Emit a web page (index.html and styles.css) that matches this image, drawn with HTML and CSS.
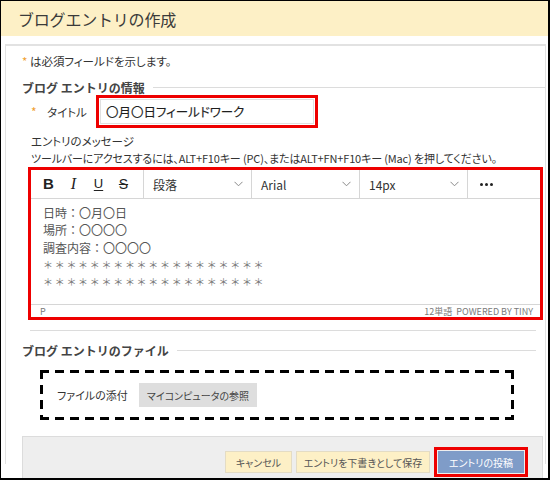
FILE: index.html
```html
<!DOCTYPE html>
<html lang="ja">
<head>
<meta charset="utf-8">
<title>ブログエントリの作成</title>
<link rel="stylesheet" href="styles.css">
</head>
<body>
<div class="frame">
  <div class="header"><h1>ブログエントリの作成</h1></div>
  <div class="panel">
    <p class="note"><span class="req">*</span> は必須フィールドを示します。</p>

    <div class="legend legend-info"><span>ブログ エントリの情報</span></div>

    <div class="title-row">
      <span class="req">*</span>
      <span class="title-label">タイトル</span>
      <div class="mark title-mark"><div class="title-input">〇月〇日フィールドワーク</div></div>
    </div>

    <div class="msg-label">エントリのメッセージ</div>
    <div class="hint">ツールバーにアクセスするには、ALT+F10キー (PC)、またはALT+FN+F10キー (Mac) を押してください。</div>

    <div class="mark editor">
      <div class="toolbar">
        <div class="tb-fmt">
          <span class="tb-btn b">B</span>
          <span class="tb-btn i">I</span>
          <span class="tb-btn u">U</span>
          <span class="tb-btn s">S</span>
        </div>
        <div class="tb-select"><span>段落</span><svg class="chev" width="9" height="6" viewBox="0 0 9 6"><path d="M0.5 0.8 L4.5 4.8 L8.5 0.8" fill="none" stroke="#8a8a8a" stroke-width="1"/></svg></div>
        <div class="tb-select"><span>Arial</span><svg class="chev" width="9" height="6" viewBox="0 0 9 6"><path d="M0.5 0.8 L4.5 4.8 L8.5 0.8" fill="none" stroke="#8a8a8a" stroke-width="1"/></svg></div>
        <div class="tb-select"><span>14px</span><svg class="chev" width="9" height="6" viewBox="0 0 9 6"><path d="M0.5 0.8 L4.5 4.8 L8.5 0.8" fill="none" stroke="#8a8a8a" stroke-width="1"/></svg></div>
        <div class="tb-more"><span class="dot"></span><span class="dot"></span><span class="dot"></span></div>
      </div>
      <div class="content">
        <p>日時：〇月〇日</p>
        <p>場所：〇〇〇〇</p>
        <p>調査内容：〇〇〇〇</p>
        <p class="stars">＊＊＊＊＊＊＊＊＊＊＊＊＊＊＊＊＊＊＊</p>
        <p class="stars">＊＊＊＊＊＊＊＊＊＊＊＊＊＊＊＊＊＊＊</p>
      </div>
      <div class="status"><span>P</span><span>12単語&nbsp;&nbsp;POWERED BY TINY</span></div>
    </div>

    <div class="sep"></div>

    <div class="legend legend-file"><span>ブログ エントリのファイル</span></div>

    <div class="attach">
      <span class="attach-label">ファイルの添付</span>
      <span class="browse">マイコンピュータの参照</span>
    </div>

    <div class="actions">
      <span class="btn btn-yellow btn-cancel">キャンセル</span>
      <span class="btn btn-yellow btn-draft">エントリを下書きとして保存</span>
      <span class="post-mark"><span class="btn btn-post">エントリの投稿</span></span>
    </div>
  </div>
</div>
</body>
</html>
```
FILE: styles.css
```css
* { box-sizing: border-box; }
html, body { margin: 0; padding: 0; background: #fff; }
body {
  font-family: "Noto Sans CJK JP", "Noto Sans", sans-serif;
  font-feature-settings: "palt";
  color: #333;
  font-size: 11px;
}
p { margin: 0; }

.frame {
  width: 550px;
  height: 480px;
  border-style: solid;
  border-color: #000;
  border-width: 1px 2px 2px 1px;
  overflow: hidden;
}

.header {
  height: 35px;
  background: #fdf0c6;
  display: flex;
  align-items: center;
  padding-left: 17px;
}
.header h1 {
  margin: 0;
  font-size: 16px;
  font-weight: normal;
  color: #3a3a3a;
  font-feature-settings: normal;
  letter-spacing: -0.2px;
}

.panel {
  margin: 8px 2px 0 4px;
  border-top: 2px solid #e2e2e2;
  border-left: 1px solid #e2e2e2;
  border-right: 1px solid #e2e2e2;
  height: 420px;
}

.note {
  margin: 7px 0 0 16px;
  line-height: 16px;
  font-size: 11.5px;
}
.req { color: #f0a030; }

.legend {
  display: flex;
  align-items: center;
  height: 16px;
  margin-left: 16px;
}
.legend span {
  font-weight: bold;
  font-size: 12px;
  color: #444;
  padding-right: 8px;
  font-feature-settings: normal;
}
.legend::after {
  content: "";
  flex: 1;
  height: 1px;
  background: #dcdcdc;
}
.legend-info { margin-top: 10px; }
.legend-file { margin-top: 11px; margin-right: 9px; }

.title-row {
  display: flex;
  align-items: center;
  height: 33px;
  margin-left: 25px;
}
.title-row .req { width: 16px; font-size: 12px; }
.title-label { width: 49px; font-size: 11.5px; }

.mark { border: 3px solid #ee0000; }
.title-mark {
  width: 222px;
  height: 33px;
  padding: 1px;
}
.title-input {
  height: 25px;
  border: 1px solid #e0e0e0;
  font-size: 12.5px;
  color: #1e1e1e;
  line-height: 23px;
  padding-left: 5px;
  -webkit-text-stroke: 0.15px #1e1e1e;
}

.msg-label {
  margin: 5px 0 0 25px;
  line-height: 17px;
  font-size: 11.5px;
}
.hint {
  margin-left: 25px;
  line-height: 17px;
  white-space: nowrap;
  letter-spacing: -0.15px;
}

.editor {
  margin-left: 22px;
  width: 515px;
  height: 153px;
  display: flex;
  flex-direction: column;
}
.toolbar {
  display: flex;
  height: 29px;
  border-bottom: 1px solid #d6d6d6;
  font-feature-settings: normal;
}
.tb-fmt {
  width: 113px;
  display: flex;
  align-items: center;
  padding-left: 5px;
  border-right: 1px solid #d6d6d6;
}
.tb-btn {
  width: 25px;
  text-align: center;
  font-size: 15px;
  color: #222;
  line-height: 20px;
}
.tb-btn.b { font-family: "Liberation Sans", sans-serif; font-weight: bold; }
.tb-btn.i { font-family: "Liberation Serif", serif; font-style: italic; font-size: 16px; }
.tb-btn.u { font-family: "Liberation Sans", sans-serif; font-size: 13px; text-decoration: underline; text-underline-offset: 2px; }
.tb-btn.s { font-family: "Liberation Sans", sans-serif; font-size: 14px; text-decoration: line-through; }

.tb-select {
  width: 108px;
  display: flex;
  align-items: center;
  justify-content: space-between;
  padding: 0 8px 0 9px;
  border-right: 1px solid #d6d6d6;
  font-size: 12px;
  color: #333;
}
.tb-more {
  display: flex;
  align-items: center;
  gap: 2px;
  padding-left: 12px;
}
.dot {
  width: 3px;
  height: 3px;
  border-radius: 50%;
  background: #222;
}

.content {
  flex: 1;
  padding: 5px 0 0 12px;
  font-size: 12px;
  line-height: 17.3px;
  color: #555;
  font-feature-settings: normal;
}
.stars {
  color: #777;
  font-size: 10px;
  letter-spacing: 1.7px;
}

.status {
  height: 13px;
  border-top: 1px solid #d6d6d6;
  display: flex;
  justify-content: space-between;
  align-items: center;
  padding: 0 7px 0 9px;
  font-size: 9px;
  color: #7a7a7a;
  font-feature-settings: normal;
}

.sep {
  margin: 10px 9px 0 24px;
  height: 1px;
  background: #dcdcdc;
}

.attach {
  margin: 12px 0 0 34px;
  width: 474px;
  height: 50px;
  display: flex;
  align-items: center;
  padding-left: 17px;
  background:
    repeating-linear-gradient(90deg, #000 0 9px, transparent 9px 15px) left top / 100% 3px no-repeat,
    repeating-linear-gradient(90deg, #000 0 9px, transparent 9px 15px) left bottom / 100% 3px no-repeat,
    repeating-linear-gradient(180deg, #000 0 9px, transparent 9px 15px) left top / 3px 100% no-repeat,
    repeating-linear-gradient(180deg, #000 0 9px, transparent 9px 15px) right top / 3px 100% no-repeat;
}
.attach-label { width: 82px; font-size: 11px; color: #333; }
.browse {
  width: 118px;
  height: 24px;
  background: #dedede;
  display: flex;
  align-items: center;
  justify-content: center;
  font-size: 10px;
  color: #444;
}

.actions {
  margin: 16px 2px 0 16px;
  height: 60px;
  background: #eeeeee;
  border: 1px solid #dcdcdc;
  border-bottom: none;
  display: flex;
  justify-content: flex-end;
  align-items: flex-start;
  gap: 4px;
  padding: 10px 14px 0 0;
}
.btn {
  height: 22px;
  display: flex;
  align-items: center;
  justify-content: center;
  font-size: 10px;
  white-space: nowrap;
}
.btn-yellow {
  background: #fdf0c6;
  border: 1px solid #e4dcc4;
  color: #555;
  margin-top: 4px;
}
.btn-cancel { width: 67px; }
.btn-draft { width: 134px; }
.post-mark {
  border: 3px solid #ee0000;
  padding: 1px;
}
.btn-post {
  width: 86px;
  background: #7f9cc8;
  color: #fff;
}
```
